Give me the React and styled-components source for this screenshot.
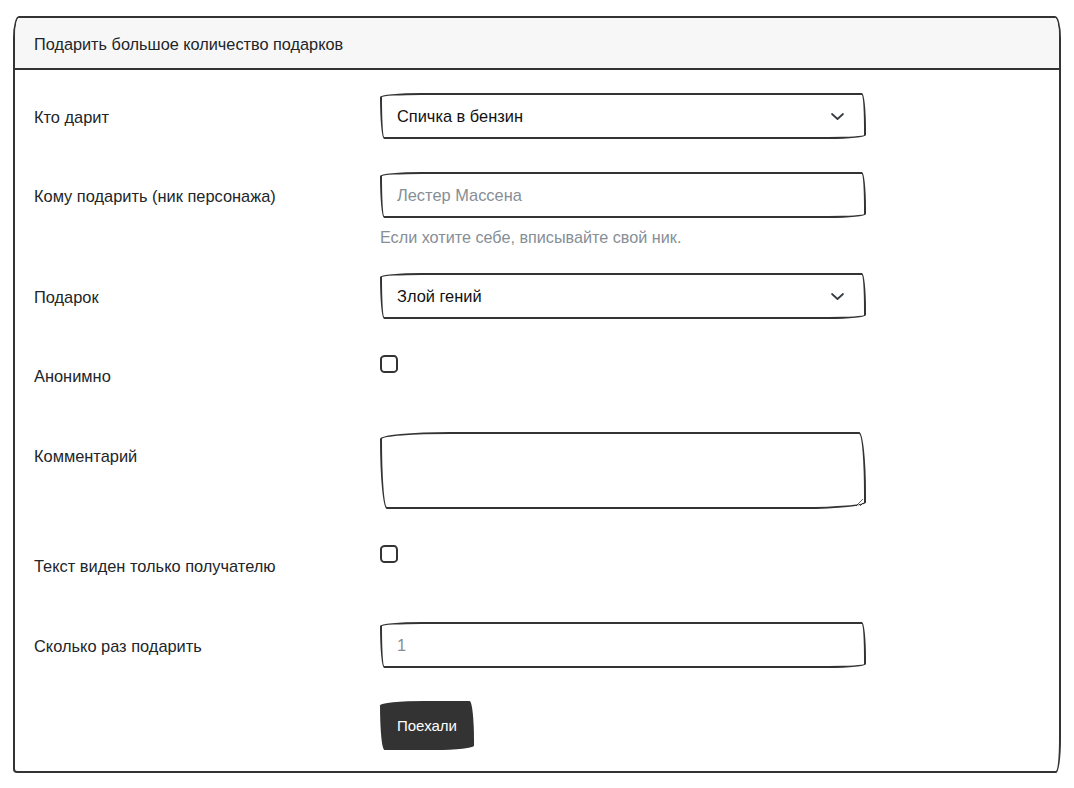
import React from "react";
import styled, { createGlobalStyle } from "styled-components";

const sketchy = "255px 25px 225px 25px / 25px 225px 25px 255px";
const ink = "#333";
const textColor = "#212529";
const muted = "#868e96";
const font = `"Liberation Sans", Arial, sans-serif`;

const Global = createGlobalStyle`
  html, body { margin: 0; padding: 0; background: #fff; }
  body { font-family: ${font}; font-size: 16.4px; color: ${textColor}; }
  * { box-sizing: border-box; }
`;

const Page = styled.div`
  padding: 16px 13px 15px 13px;
`;

const Card = styled.section`
  width: 1048px;
  border: 2px solid ${ink};
  border-radius: 6px 6px 5px 4px / 22px 22px 34px 4px;
  overflow: hidden;
  background: #fff;
`;

const CardHeader = styled.header`
  background: #f7f7f7;
  border-bottom: 2px solid ${ink};
  padding: 13px 19px 11px;
  line-height: 26px;
  font-size: 16.3px;
`;

const CardBody = styled.div`
  padding: 23px 20px 21px 19px;
  display: flex;
  flex-direction: column;
  gap: 33px;
`;

const Row = styled.div`
  display: grid;
  grid-template-columns: 346px 486px;
  align-items: start;
  min-height: ${(p) => p.$min || 0}px;
`;

const Label = styled.label`
  height: 46px;
  padding-top: 2px;
  line-height: 44px;
  font-size: 16.4px;
  white-space: nowrap;
`;

const Field = styled.div`
  display: flex;
  flex-direction: column;
`;

const SelectBox = styled.div`
  position: relative;
  height: 46px;
  border: 2px solid ${ink};
  border-radius: ${sketchy};
  display: flex;
  align-items: center;
  padding: 1px 15px 0;
  background: #fff;
  font-size: 16.4px;
  color: #111;
`;

const Chevron = styled.svg`
  position: absolute;
  right: 20px;
  top: 50%;
  margin-top: -3px;
`;

const Input = styled.input`
  height: 46px;
  width: 100%;
  border: 2px solid ${ink};
  border-radius: ${sketchy};
  padding: 1px 15px 0;
  font-family: ${font};
  font-size: 16.4px;
  color: ${textColor};
  background: #fff;
  outline: none;
  &::placeholder { color: ${muted}; opacity: 1; }
`;

const TextArea = styled.textarea`
  height: 77px;
  width: 100%;
  border: 2px solid ${ink};
  border-radius: ${sketchy};
  padding: 8px 15px;
  font-family: ${font};
  font-size: 16.4px;
  background: #fff;
  outline: none;
  display: block;
`;

const Help = styled.small`
  display: block;
  margin-top: 8px;
  margin-bottom: -8px;
  line-height: 22px;
  font-size: 16.2px;
  color: ${muted};
`;

const Check = styled.span`
  display: block;
  width: 18px;
  height: 18px;
  margin-top: 3px;
  border: 2px solid ${ink};
  border-radius: 5px 4px 5px 4px / 4px 5px 4px 5px;
  background: #fff;
`;

const Button = styled.button`
  justify-self: start;
  height: 49px;
  padding: 0 17px;
  border: none;
  background: ${ink};
  color: #fff;
  font-family: ${font};
  font-size: 15px;
  border-radius: ${sketchy};
  cursor: pointer;
`;

function Select({ value }) {
  return (
    <SelectBox>
      {value}
      <Chevron width="13" height="7" viewBox="0 0 13 7" fill="none">
        <path d="M1 1l5.5 5L12 1" stroke="#343a40" strokeWidth="1.7" strokeLinecap="round" strokeLinejoin="round" />
      </Chevron>
    </SelectBox>
  );
}

export default function App() {
  return (
    <Page>
      <Global />
      <Card>
        <CardHeader>Подарить большое количество подарков</CardHeader>
        <CardBody>
          <Row>
            <Label>Кто дарит</Label>
            <Select value="Спичка в бензин" />
          </Row>
          <Row>
            <Label>Кому подарить (ник персонажа)</Label>
            <Field>
              <Input placeholder="Лестер Массена" />
              <Help>Если хотите себе, вписывайте свой ник.</Help>
            </Field>
          </Row>
          <Row>
            <Label>Подарок</Label>
            <Select value="Злой гений" />
          </Row>
          <Row $min={47}>
            <Label>Анонимно</Label>
            <Check />
          </Row>
          <Row>
            <Label>Комментарий</Label>
            <TextArea />
          </Row>
          <Row $min={47}>
            <Label>Текст виден только получателю</Label>
            <Check />
          </Row>
          <Row>
            <Label>Сколько раз подарить</Label>
            <Input placeholder="1" />
          </Row>
          <Row>
            <span />
            <Button>Поехали</Button>
          </Row>
        </CardBody>
      </Card>
    </Page>
  );
}
